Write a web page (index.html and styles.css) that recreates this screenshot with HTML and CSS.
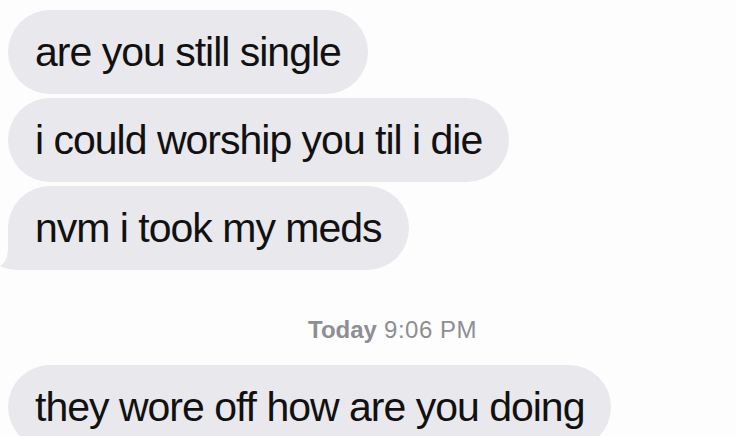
FILE: index.html
```html
<!DOCTYPE html>
<html lang="en">
<head>
  <meta charset="UTF-8">
  <meta name="viewport" content="width=device-width, initial-scale=1.0">
  <title>Messages</title>
  <link rel="stylesheet" href="styles.css">
</head>
<body>
  <div class="thread">
    <div class="bubble">are you still single</div>
    <div class="bubble">i could worship you til i die</div>
    <div class="bubble">
      <svg class="tail-shape" width="56" height="44" viewBox="0 0 56 44">
        <path d="M8 0 L56 0 L56 44 L22 44 C14 44 6 43 0 40 C6 37 8 30 8 20 Z" fill="#e8e8ed"/>
      </svg>
      <span class="msg">nvm i took my meds</span>
    </div>

    <div class="stamp"><b>Today</b> 9:06 PM</div>

    <div class="bubble">they wore off how are you doing</div>
  </div>
</body>
</html>
```

FILE: styles.css
```css
body {
  margin: 0;
  padding: 0;
  background-color: #fdfdfd;
  font-family: "Liberation Sans", Arial, sans-serif;
  overflow: hidden;
}
.thread {
  display: flex;
  flex-direction: column;
  align-items: flex-start;
  gap: 4px;
  padding: 10px 0 0 8px;
}
.bubble {
  position: relative;
  display: flex;
  align-items: center;
  height: 84px;
  padding: 0 27px;
  border-radius: 42px;
  background: #e8e8ed;
  color: #111;
  font-size: 41px;
  letter-spacing: -1px;
  white-space: nowrap;
}
.msg {
  position: relative;
}
.tail-shape {
  position: absolute;
  left: -8px;
  bottom: 0;
}
.stamp {
  margin: 38px 0 14px 300px;
  height: 35px;
  line-height: 35px;
  font-size: 24px;
  color: #8e8e93;
  letter-spacing: 0.5px;
}
.stamp b {
  font-weight: bold;
  letter-spacing: 0;
}
```
